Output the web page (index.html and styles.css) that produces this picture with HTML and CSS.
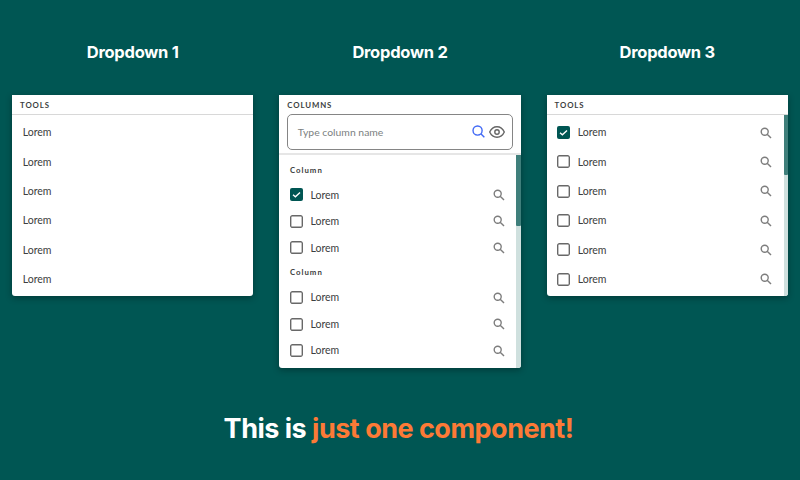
FILE: index.html
```
<!DOCTYPE html>
<html lang="en">
<head>
<meta charset="utf-8">
<title>Dropdowns</title>
<link rel="stylesheet" href="styles.css">
</head>
<body>
<svg width="0" height="0" class="defs">
  <symbol id="search" viewBox="0 0 12 12"><circle cx="4.7" cy="4.7" r="3.5"/><path d="M7.2 7.2L11 11"/></symbol>
  <symbol id="tick" viewBox="0 0 13 13"><path d="M3 6.7L5.4 8.7L10 4.5"/></symbol>
  <symbol id="empty" viewBox="0 0 13 13"><rect x=".7" y=".7" width="11.6" height="11.6" rx="1.3"/></symbol>
</svg>
<main class="columns">
  <section class="column">
    <h2 class="title">Dropdown 1</h2>
    <div class="card">
      <div class="head"><span>TOOLS</span></div>
      <div class="list">
        <div class="row"><span class="label">Lorem</span></div>
        <div class="row"><span class="label">Lorem</span></div>
        <div class="row"><span class="label">Lorem</span></div>
        <div class="row"><span class="label">Lorem</span></div>
        <div class="row"><span class="label">Lorem</span></div>
        <div class="row"><span class="label">Lorem</span></div>
      </div>
    </div>
  </section>
  <section class="column">
    <h2 class="title">Dropdown 2</h2>
    <div class="card grouped">
      <div class="head wide"><span>COLUMNS</span></div>
      <div class="search">
        <div class="field">
          <span class="hint">Type column name</span>
          <svg class="find" viewBox="0 0 14 14"><circle cx="6" cy="6" r="4.9"/><path d="M9.5 9.5L13.3 13.3"/></svg>
          <svg class="eye" viewBox="0 0 16 12"><path d="M.7 6C2.2 2.7 4.8.8 8 .8S13.8 2.7 15.3 6C13.8 9.3 11.2 11.2 8 11.2S2.2 9.3.7 6Z"/><circle cx="8" cy="6" r="2.2"/></svg>
        </div>
      </div>
      <div class="scroller">
        <div class="list">
          <div class="group">Column</div>
          <div class="row"><svg class="box on"><use href="#tick"/></svg><span class="label">Lorem</span><svg class="glass"><use href="#search"/></svg></div>
          <div class="row"><svg class="box"><use href="#empty"/></svg><span class="label">Lorem</span><svg class="glass"><use href="#search"/></svg></div>
          <div class="row"><svg class="box"><use href="#empty"/></svg><span class="label">Lorem</span><svg class="glass"><use href="#search"/></svg></div>
          <div class="group">Column</div>
          <div class="row"><svg class="box"><use href="#empty"/></svg><span class="label">Lorem</span><svg class="glass"><use href="#search"/></svg></div>
          <div class="row"><svg class="box"><use href="#empty"/></svg><span class="label">Lorem</span><svg class="glass"><use href="#search"/></svg></div>
          <div class="row"><svg class="box"><use href="#empty"/></svg><span class="label">Lorem</span><svg class="glass"><use href="#search"/></svg></div>
        </div>
        <div class="track"><div class="thumb"></div></div>
      </div>
    </div>
  </section>
  <section class="column">
    <h2 class="title">Dropdown 3</h2>
    <div class="card checks">
      <div class="head"><span>TOOLS</span></div>
      <div class="scroller">
        <div class="list">
          <div class="row"><svg class="box on"><use href="#tick"/></svg><span class="label">Lorem</span><svg class="glass"><use href="#search"/></svg></div>
          <div class="row"><svg class="box"><use href="#empty"/></svg><span class="label">Lorem</span><svg class="glass"><use href="#search"/></svg></div>
          <div class="row"><svg class="box"><use href="#empty"/></svg><span class="label">Lorem</span><svg class="glass"><use href="#search"/></svg></div>
          <div class="row"><svg class="box"><use href="#empty"/></svg><span class="label">Lorem</span><svg class="glass"><use href="#search"/></svg></div>
          <div class="row"><svg class="box"><use href="#empty"/></svg><span class="label">Lorem</span><svg class="glass"><use href="#search"/></svg></div>
          <div class="row"><svg class="box"><use href="#empty"/></svg><span class="label">Lorem</span><svg class="glass"><use href="#search"/></svg></div>
        </div>
        <div class="track"><div class="thumb"></div></div>
      </div>
    </div>
  </section>
</main>
<p class="tagline">This is <span class="accent">just one component!</span></p>
</body>
</html>
```
FILE: styles.css
```
* { box-sizing: border-box; }
body {
  margin: 0;
  height: 480px;
  overflow: hidden;
  background: #005653;
  color: #3c4040;
  font-family: Lato, sans-serif;
}
svg {
  display: block;
  flex: none;
  fill: none;
  stroke: currentColor;
}
.defs { position: absolute; }
.columns {
  display: grid;
  grid-template-columns: repeat(3, 241.4px);
  column-gap: 25.9px;
  height: 400px;
  padding: 0 12px;
  align-items: start;
}
.title {
  margin: 0;
  height: 94.5px;
  padding-top: 42px;
  font-family: Inter, sans-serif;
  font-size: 16.5px;
  line-height: 20px;
  font-weight: 700;
  letter-spacing: -.25px;
  text-align: center;
  white-space: nowrap;
  color: #fff;
}
.card {
  height: 201.5px;
  background: #fff;
  border-radius: 0 0 3px 3px;
  overflow: hidden;
  box-shadow: 0 2px 6px rgba(0, 20, 20, .4);
}
.grouped { height: 273.5px; }
.head {
  height: 20.5px;
  padding-left: 8px;
  border-bottom: 1px solid #d8d8d8;
  font-size: 7.8px;
  line-height: 20px;
  font-weight: 700;
  letter-spacing: .9px;
}
.wide { height: 19.5px; border: 0; }
.search {
  height: 40.5px;
  padding: 0 8px;
  border-bottom: 2px solid #e6e6e6;
}
.field {
  display: flex;
  align-items: center;
  height: 35.5px;
  padding: 0 7px 0 9.5px;
  border: 1px solid #858585;
  border-radius: 5px;
}
.hint {
  flex: 1;
  font-size: 10.4px;
  color: #7b7f7f;
}
.find {
  width: 13px;
  height: 13px;
  margin-right: 4px;
  color: #4169f5;
  stroke-width: 1.5;
}
.eye {
  width: 16px;
  height: 12px;
  color: #666;
  stroke-width: 1.4;
}
.scroller { display: flex; }
.list {
  flex: 1;
  padding: 3px 0 0 10.7px;
}
.grouped .list { padding-top: 4px; }
.row {
  display: flex;
  align-items: center;
  height: 29.33px;
  padding-right: 11.4px;
}
.grouped .row { height: 26.6px; }
.group {
  height: 23px;
  font-size: 7.8px;
  line-height: 23px;
  font-weight: 700;
  letter-spacing: 1px;
}
.label {
  flex: 1;
  padding-bottom: .6px;
  font-size: 10.5px;
  line-height: 14px;
}
.box {
  width: 13px;
  height: 13px;
  margin-right: 7.5px;
  color: #686868;
  stroke-width: 1.4;
  border-radius: 2px;
}
.on {
  background: #005653;
  color: #fff;
}
.glass {
  width: 12px;
  height: 12px;
  color: #7d7d7d;
  stroke-width: 1.4;
}
.track {
  width: 4.2px;
  height: 214px;
  background: #cfe0de;
}
.thumb {
  height: 71px;
  background: #3f7f7b;
  border-radius: 0 0 1px 1px;
}
.checks .track { height: 181px; }
.checks .thumb { height: 60px; }
.tagline {
  margin: 0;
  padding: 13px 3px 0 0;
  font-family: Inter, sans-serif;
  font-size: 27px;
  line-height: 32px;
  font-weight: 700;
  letter-spacing: -.5px;
  text-align: center;
  white-space: nowrap;
  color: #fff;
}
.accent { color: #fd7a36; }
```
